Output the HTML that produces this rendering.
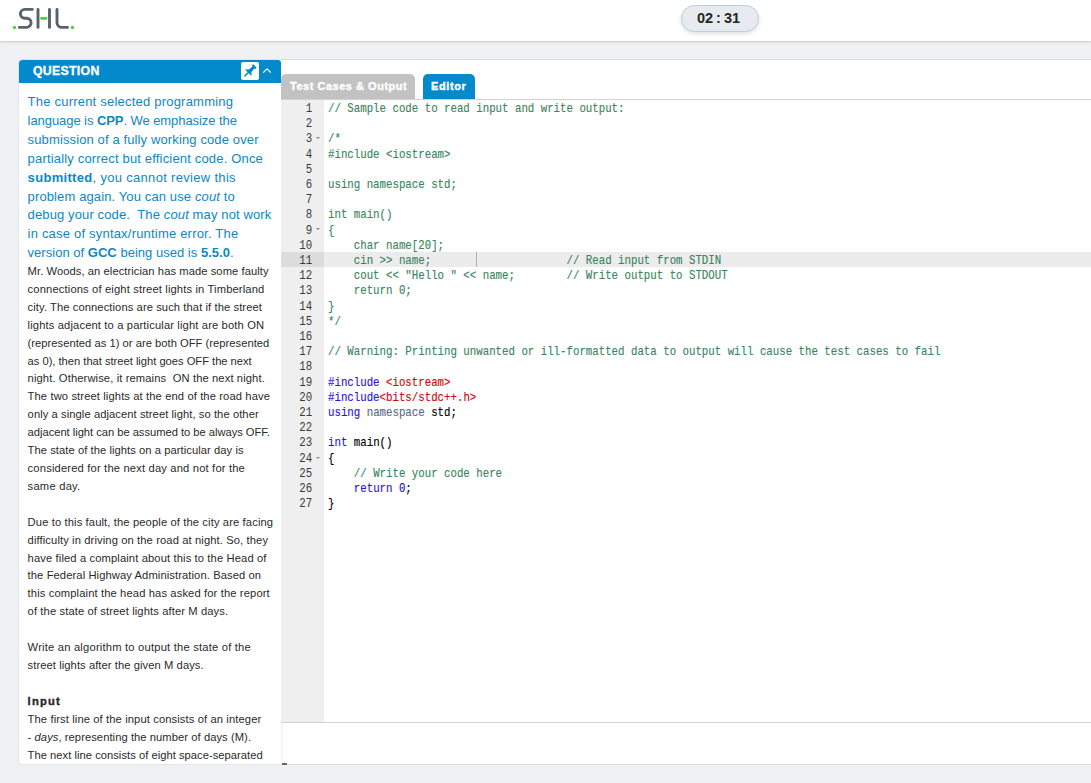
<!DOCTYPE html>
<html><head><meta charset="utf-8">
<style>
*{margin:0;padding:0;box-sizing:border-box}
html,body{width:1091px;height:783px;overflow:hidden;background:#f0f1f3;font-family:"Liberation Sans",sans-serif;position:relative}
#hdr{position:absolute;left:0;top:0;width:1091px;height:41px;background:#fff;box-shadow:0 1px 2px rgba(0,0,0,0.18)}
#logo{position:absolute;left:10px;top:5px}
#timer{position:absolute;left:681px;top:5px;width:78px;height:27px;border-radius:14px;background:#e7ebef;border:1px solid #bccfe0;box-shadow:0 2px 4px rgba(0,0,0,0.12);font-weight:bold;font-size:14.5px;color:#262626;text-align:center;line-height:25px;word-spacing:-1px;text-indent:-3px}
#ed{position:absolute;left:281px;top:59px;width:810px;height:706px;background:#fff;border-top:1px solid #d6dee6;border-bottom:1px solid #d6dde4}
.tab{position:absolute;top:14px;height:25px;border-radius:5px 5px 0 0;color:#fff;font-weight:bold;font-size:11px;letter-spacing:0.4px;line-height:25px;-webkit-text-stroke:0.35px #fff}
#t1{left:0;width:134px;background:#c2c2c2;padding-left:9px;letter-spacing:0.52px}
#t2{left:142px;width:52px;background:#038acd;padding-left:8px;letter-spacing:0.6px}
#tabline{position:absolute;left:0;top:39px;width:810px;height:1px;background:#d2d2d2}
#gut{position:absolute;left:0;top:40px;width:43px;height:622px;background:#efefef}
#botline{position:absolute;left:0;top:662px;width:810px;height:1px;background:#d2d2d2}
#act{position:absolute;left:43px;top:192px;width:767px;height:15.2px;background:#ececec}
#actg{position:absolute;left:0;top:192px;width:43px;height:15.2px;background:#dcdcdc}
#cursor{position:absolute;left:195px;top:192px;width:1px;height:15px;background:#b0b0b0}
.code{position:absolute;left:47px;top:42px;font-family:"Liberation Mono",monospace;font-size:12.4px;line-height:15.2px;white-space:pre;color:#000;transform:scaleX(0.8669);transform-origin:0 0;-webkit-text-stroke:0.15px}
.nums{position:absolute;left:0;top:42px;width:36px;text-align:right;font-family:"Liberation Mono",monospace;font-size:12.4px;line-height:15.2px;color:#3a3a3a;white-space:pre;transform:scaleX(0.8669);transform-origin:0 0}
.cm{color:#3a8660}
.kw{color:#2c14e6}
.cs{color:#d3060e}
.sf{color:#5b6b86}
.num{color:#1a10cc}
.fold{position:absolute;left:35px;width:0;height:0;border-left:2px solid transparent;border-right:2px solid transparent;border-top:2.5px solid #888}
#qp{position:absolute;left:18px;top:59px;width:263px;height:706px;background:#fff;border-radius:4px 0 0 4px;border:1px solid #dfe5ea;border-right:none;overflow:hidden}
#qh{position:absolute;left:0;top:0;width:262px;height:23px;background:#038acd;border-radius:3px 3px 0 0}
#qt{position:absolute;left:14px;top:0;color:#fff;font-weight:bold;font-size:12.3px;line-height:23px;letter-spacing:0.3px;-webkit-text-stroke:0.3px #fff}
#pin{position:absolute;left:222px;top:2px}
#caret{position:absolute;left:243px;top:7px}
.bl{position:absolute;left:8.6px;white-space:pre;font-size:13px;letter-spacing:0.15px;color:#0c87c8;line-height:18.9px}
.bk{position:absolute;left:8.6px;white-space:pre;font-size:11.2px;color:#2a2a2a;line-height:17.91px}
b{font-weight:bold}
</style></head><body>
<div id="hdr">
 <svg id="logo" width="70" height="30" viewBox="0 0 70 30">
  <circle cx="4.4" cy="22.4" r="1.7" fill="#43d63a"/>
  <path d="M22.3 4.4 H14.8 A4.4 4.4 0 0 0 14.8 13.2 H16.5 A4.6 4.6 0 0 1 16.5 22.4 H9.3" fill="none" stroke="#58626c" stroke-width="2.9" stroke-linecap="round"/>
  <line x1="28" y1="4.4" x2="28" y2="22.4" stroke="#58626c" stroke-width="2.9" stroke-linecap="round"/>
  <line x1="39.5" y1="4.4" x2="39.5" y2="22.4" stroke="#58626c" stroke-width="2.9" stroke-linecap="round"/>
  <line x1="31.5" y1="13.4" x2="36" y2="13.4" stroke="#43d63a" stroke-width="2.6" stroke-linecap="round"/>
  <path d="M47 4.4 V17.4 A5 5 0 0 0 52 22.4 H57.5" fill="none" stroke="#58626c" stroke-width="2.9" stroke-linecap="round"/>
  <circle cx="62.4" cy="22.4" r="1.7" fill="#43d63a"/>
 </svg>
 <div id="timer">02 : 31</div>
</div>

<div id="ed">
 <div class="tab" id="t1">Test Cases &amp; Output</div>
 <div class="tab" id="t2">Editor</div>
 <div id="tabline"></div>
 <div id="gut"></div>
 <div id="actg"></div>
 <div id="act"></div>
 <div id="cursor"></div>
 <div id="botline"></div>
 <div style="position:absolute;left:0;top:663px;width:3px;height:41px;background:linear-gradient(90deg,#f2f2f2,#fff)"></div>
 <div style="position:absolute;left:1px;top:703px;width:5px;height:1.5px;background:#666"></div>
 <div class="nums">1
2
3
4
5
6
7
8
9
10
11
12
13
14
15
16
17
18
19
20
21
22
23
24
25
26
27</div>
 <div class="fold" style="top:77px"></div>
 <div class="fold" style="top:168px"></div>
 <div class="fold" style="top:397px"></div>
 <div class="code"><span class="cm">// Sample code to read input and write output:

/*
#include &lt;iostream&gt;

using namespace std;

int main()
{
    char name[20];
    cin &gt;&gt; name;                     // Read input from STDIN
    cout &lt;&lt; "Hello " &lt;&lt; name;        // Write output to STDOUT
    return 0;
}
*/

// Warning: Printing unwanted or ill-formatted data to output will cause the test cases to fail</span>

<span class="kw">#include</span> <span class="cs">&lt;iostream&gt;</span>
<span class="kw">#include</span><span class="cs">&lt;bits/stdc++.h&gt;</span>
<span class="kw">using</span> <span class="sf">namespace</span> std;

<span class="kw">int</span> main()
{
    <span class="cm">// Write your code here</span>
    <span class="kw">return</span> <span class="num">0</span>;
}</div>
</div>

<div id="qp">
 <div class="bl" style="top:33.05px;letter-spacing:0.215px">The current selected programming</div>
 <div class="bl" style="top:51.95px;letter-spacing:-0.069px">language is <b>CPP</b>. We emphasize the</div>
 <div class="bl" style="top:70.84px;letter-spacing:0.124px">submission of a fully working code over</div>
 <div class="bl" style="top:89.74px;letter-spacing:0.174px">partially correct but efficient code. Once</div>
 <div class="bl" style="top:108.64px;letter-spacing:0.313px"><b>submitted</b>, you cannot review this</div>
 <div class="bl" style="top:127.54px;letter-spacing:0.120px">problem again. You can use <i>cout</i> to</div>
 <div class="bl" style="top:146.44px;letter-spacing:0.124px">debug your code.  The <i>cout</i> may not work</div>
 <div class="bl" style="top:165.34px;letter-spacing:0.200px">in case of syntax/runtime error. The</div>
 <div class="bl" style="top:184.24px;letter-spacing:0.021px">version of <b>GCC</b> being used is <b>5.5.0</b>.</div>
 <div class="bk" style="top:202.96px;letter-spacing:0.067px">Mr. Woods, an electrician has made some faulty</div>
 <div class="bk" style="top:220.87px;letter-spacing:0.141px">connections of eight street lights in Timberland</div>
 <div class="bk" style="top:238.78px;letter-spacing:0.083px">city. The connections are such that if the street</div>
 <div class="bk" style="top:256.69px;letter-spacing:0.133px">lights adjacent to a particular light are both ON</div>
 <div class="bk" style="top:274.60px;letter-spacing:0.022px">(represented as 1) or are both OFF (represented</div>
 <div class="bk" style="top:292.51px;letter-spacing:-0.022px">as 0), then that street light goes OFF the next</div>
 <div class="bk" style="top:310.42px;letter-spacing:0.111px">night. Otherwise, it remains  ON the next night.</div>
 <div class="bk" style="top:328.33px;letter-spacing:0.112px">The two street lights at the end of the road have</div>
 <div class="bk" style="top:346.24px;letter-spacing:0.072px">only a single adjacent street light, so the other</div>
 <div class="bk" style="top:364.15px;letter-spacing:-0.030px">adjacent light can be assumed to be always OFF.</div>
 <div class="bk" style="top:382.06px;letter-spacing:0.059px">The state of the lights on a particular day is</div>
 <div class="bk" style="top:399.97px;letter-spacing:0.167px">considered for the next day and not for the</div>
 <div class="bk" style="top:417.88px;letter-spacing:0.225px">same day.</div>
 <div class="bk" style="top:453.70px;letter-spacing:0.118px">Due to this fault, the people of the city are facing</div>
 <div class="bk" style="top:471.61px;letter-spacing:0.109px">difficulty in driving on the road at night. So, they</div>
 <div class="bk" style="top:489.52px;letter-spacing:0.119px">have filed a complaint about this to the Head of</div>
 <div class="bk" style="top:507.43px;letter-spacing:0.093px">the Federal Highway Administration. Based on</div>
 <div class="bk" style="top:525.34px;letter-spacing:0.123px">this complaint the head has asked for the report</div>
 <div class="bk" style="top:543.25px;letter-spacing:0.111px">of the state of street lights after M days.</div>
 <div class="bk" style="top:579.07px;letter-spacing:0.199px">Write an algorithm to output the state of the</div>
 <div class="bk" style="top:596.98px;letter-spacing:0.071px">street lights after the given M days.</div>
 <div class="bk" style="top:632.80px;letter-spacing:1.175px"><b style="-webkit-text-stroke:0.35px #222">Input</b></div>
 <div class="bk" style="top:650.71px;letter-spacing:0.110px">The first line of the input consists of an integer</div>
 <div class="bk" style="top:668.62px;letter-spacing:0.061px">- <i>days</i>, representing the number of days (M).</div>
 <div class="bk" style="top:686.53px;letter-spacing:0.027px">The next line consists of eight space-separated</div>
 <div id="qh">
  <div id="qt">QUESTION</div>
  <svg id="pin" width="18" height="18" viewBox="0 0 18 18"><rect x="0" y="0" width="18" height="18" rx="2" fill="#fff"/><g transform="translate(7.6 10.3) rotate(45)" fill="#038acd"><rect x="-0.75" y="-0.5" width="1.5" height="6.6" rx="0.75"/><path d="M-4.6 0.6 L4.6 0.6 L1.9 -2.2 L1.3 -7 L-1.3 -7 L-1.9 -2.2 Z"/><rect x="-2.4" y="-9" width="4.8" height="2.3" rx="0.5"/></g></svg>
  <svg id="caret" width="10" height="7" viewBox="0 0 10 7"><path d="M1.2 5.6 L5 1.8 L8.8 5.6" fill="none" stroke="#fff" stroke-width="1.25"/></svg>
 </div>
</div>
</body></html>
